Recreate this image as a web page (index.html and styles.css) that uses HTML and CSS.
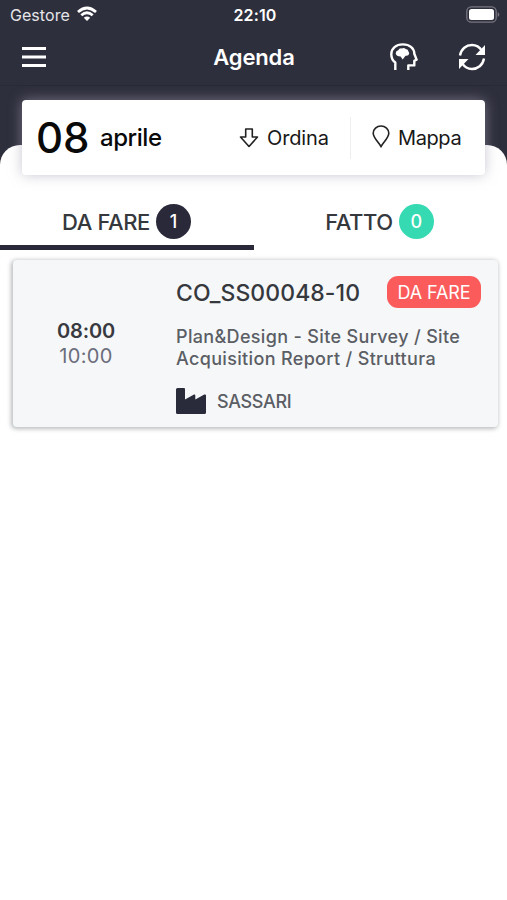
FILE: index.html
```html
<!DOCTYPE html>
<html lang="it">
<head>
<meta charset="utf-8">
<title>Agenda</title>
<link rel="stylesheet" href="styles.css">
</head>
<body>
<header class="top">
  <div class="status">
    <div class="carrier"><span>Gestore</span>
      <svg width="20" height="16" viewBox="0 0 20 16" fill="none" stroke="#fff" stroke-width="2.800"><path d="M1 6 Q10 -2 19 6M4.300 9.300 Q10 4.300 15.700 9.300"/><path d="M10 15 L6.800 11.800 Q10 9.200 13.200 11.800Z" fill="#fff" stroke="none"/></svg>
    </div>
    <time class="clock">22:10</time>
    <svg class="battery" width="34" height="17" viewBox="0 0 34 17"><rect x=".8" y=".8" width="29.400" height="15.400" rx="4.500" fill="none" stroke="#777681" stroke-width="1.300"/><rect x="3" y="3" width="25" height="11" rx="2.500" fill="#fff"/><path d="M31.700 6v5q1.600-1 1.600-2.500T31.700 6" fill="#777681"/></svg>
  </div>
  <nav class="nav">
    <svg width="24" height="22" viewBox="0 0 24 22" stroke="#fff" stroke-width="3"><path d="M0 2.500h24M0 11h24M0 19.500h24"/></svg>
    <h1>Agenda</h1>
    <div class="actions">
      <svg width="28" height="28" viewBox="0 0 28 28"><path d="M5.300 27V19.500Q1.300 16.500 1.300 11.200C1.300 5.200 6 1.400 12.800 1.400C20 1.400 24.300 5.500 24.300 10.800L26.600 16.600L24.300 17.800V22.400H18.300V27" fill="none" stroke="#fff" stroke-width="2.400" stroke-linejoin="round"/><path d="M5.700 10.500Q5.800 7.600 8.300 7.200Q9.300 4.900 12 5.400Q14 4.200 15.700 6Q18.200 6 18.500 8.500Q20 10 18.500 12Q17.500 13 15.500 12.700L12.700 16.500L10.600 13.500Q6.300 13.500 5.700 10.500Z" fill="#fff"/></svg>
      <svg width="28" height="28" viewBox="0 0 28 28"><path d="M2 12.500C3.200 5.800 8.200 2 14 2C18.200 2 21.700 4.300 24 7.800M26 15.500C24.800 22.200 19.800 26 14 26C9.800 26 6.300 23.700 4 20.200" fill="none" stroke="#fff" stroke-width="2.400"/><path d="M27 2v10H17.500zM1 26V16h9.500z" fill="#fff"/></svg>
    </div>
  </nav>
</header>
<main class="sheet">
  <section class="datebar">
    <span class="day">08</span><span class="month">aprile</span>
    <div class="tool order"><svg width="20" height="20" viewBox="0 0 20 20" fill="none" stroke="#222" stroke-width="1.600" stroke-linejoin="round"><path d="M6.700 1h6.600v8h5.200L10 18.500 1.500 9h5.200z"/></svg><span>Ordina</span></div>
    <div class="tool map"><svg width="18" height="23" viewBox="0 0 18 23" fill="none" stroke="#222" stroke-width="1.600"><path d="M9 21.500C6.700 17.500 1.200 12.500 1.200 8.200a7.800 7.200 0 0 1 15.600 0C16.800 12.500 11.300 17.500 9 21.500Z"/></svg><span>Mappa</span></div>
  </section>
  <div class="tabs">
    <div class="tab active"><span>DA FARE</span><b>1</b></div>
    <div class="tab"><span>FATTO</span><b class="green">0</b></div>
  </div>
  <article class="card">
    <div class="times"><strong>08:00</strong><span>10:00</span></div>
    <div class="details">
      <div class="heading"><h2>CO_SS00048-10</h2><span class="pill">DA FARE</span></div>
      <p><span>Plan&amp;Design - Site Survey / Site</span><br><span>Acquisition Report / Struttura</span></p>
      <div class="place"><svg width="30" height="26" viewBox="0 0 30 26"><path d="M1.500 0H8Q9 0 9 1V11.500L18 6.500Q19.300 6 19.300 7.500V11.500L28.300 6.500Q30 6 30 7.500V24.500Q30 26 28.500 26H1.500Q0 26 0 24.500V1.500Q0 0 1.500 0Z" fill="#292a3a"/></svg><span>SASSARI</span></div>
    </div>
  </article>
</main>
</body>
</html>
```
FILE: styles.css
```css
* { box-sizing: border-box; }
body { margin: 0; min-height: 900px; background: #fff; color: #35383d; font-family: Inter, "Liberation Sans", sans-serif; overflow: hidden; }
svg { display: block; flex: none; }
span, strong, time, h1, h2 { white-space: nowrap; }
.top { height: 170px; background: #2e2f3d; color: #fff; }
.status { height: 30px; display: grid; grid-template-columns: 1fr auto 1fr; align-items: center; padding: 0 7px 0 10px; }
.carrier { display: flex; align-items: center; gap: 7px; font-size: 16px; letter-spacing: .05px; color: #e5e5e9; }
.carrier svg { margin-top: -2px; }
.clock { font-size: 16px; font-weight: 600; letter-spacing: .15px; }
.battery { justify-self: end; margin-top: -2px; }
.nav { height: 56px; padding: 0 21px 2px 22px; display: grid; grid-template-columns: 1fr auto 1fr; align-items: center; border-bottom: 1px solid #292a37; }
h1 { margin: 1px 0 0; font-size: 22px; font-weight: 600; line-height: 28px; letter-spacing: -.15px; }
.actions { justify-self: end; display: flex; gap: 40px; }
.sheet { margin-top: -25px; height: 755px; background: #fff; border-radius: 20px 20px 0 0; display: flow-root; }
.datebar { height: 75px; width: 463px; margin: -45px 0 0 22px; position: relative; background: #fff; border-radius: 4px; display: flex; align-items: center; box-shadow: 0 0 13px rgba(163,159,176,.6); color: #090909; }
.day { width: 64px; margin-left: 14px; font-size: 42px; font-weight: 500; line-height: 50px; }
.month { width: 139px; font-size: 24px; font-weight: 500; line-height: 30px; letter-spacing: -.45px; }
.tool { display: flex; align-items: center; font-size: 20px; line-height: 26px; color: #181818; letter-spacing: -.15px; }
.order { width: 112px; height: 42px; gap: 8px; border-right: 1px solid #eee; }
.map { padding-left: 21px; gap: 8px; letter-spacing: -.4px; }
.map svg { margin-top: -2px; }
.tabs { display: grid; grid-template-columns: 254px 253px; height: 55px; margin-top: 20px; }
.tab { display: flex; justify-content: center; align-items: center; gap: 6px; font-size: 22px; font-weight: 500; letter-spacing: -.38px; border-bottom: 5px solid transparent; padding: 3px 2px 0 0; }
.tab.active { border-color: #2a2939; padding-right: 1px; }
.tab b { width: 35px; height: 35px; border-radius: 50%; background: #2a2939; color: #fff; text-align: center; font-size: 18px; font-weight: 500; line-height: 35px; letter-spacing: 0; }
.tab b.green { background: #35d9b2; }
.card { width: 485px; height: 167px; margin: 10px 0 0 13px; border-radius: 4px; background: #f5f7f9; display: grid; grid-template-columns: 163px 1fr; box-shadow: -1px 1px 4px 1px rgba(30,35,42,.3); }
.times { padding: 59px 17px 0 0; display: flex; flex-direction: column; align-items: center; font-size: 20px; line-height: 24.500px; letter-spacing: .4px; color: #6b6d7b; }
.times strong { color: #383a40; font-weight: 600; letter-spacing: -.2px; }
.heading { height: 32px; margin: 16px 17px 0 0; display: flex; align-items: center; justify-content: space-between; }
h2 { font-size: 23px; font-weight: 500; margin: 2px 0 0; letter-spacing: .08px; }
.pill { width: 94px; height: 32px; border-radius: 11px; background: #fb5c5b; color: #fff; text-align: center; font-size: 18px; line-height: 33px; letter-spacing: -.1px; }
p { margin: 18px 0 0; font-size: 18px; font-weight: 500; line-height: 22px; letter-spacing: .34px; color: #5b5e64; }
.place { display: flex; gap: 11px; align-items: center; height: 26px; margin-top: 18px; font-size: 18px; font-weight: 500; letter-spacing: -.35px; color: #5b5e64; }
```
